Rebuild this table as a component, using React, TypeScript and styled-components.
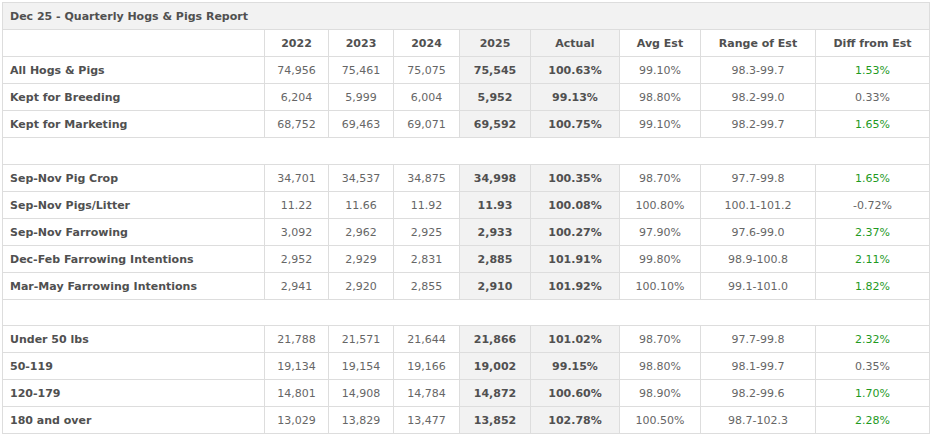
import React from 'react';
import styled, { createGlobalStyle } from 'styled-components';

const GlobalStyle = createGlobalStyle`
  body {
    margin: 0;
    background: #ffffff;
    font-family: 'DejaVu Sans', Verdana, sans-serif;
  }
`;

const Page = styled.div`
  padding: 2px 0 0 2px;
`;

const Table = styled.table`
  width: 927px;
  table-layout: fixed;
  border-collapse: collapse;
  font-size: 11px;
  color: #666666;
  border: 1px solid #dddddd;
`;

const Caption = styled.th`
  height: 26px;
  padding: 0 7px;
  text-align: left;
  font-weight: bold;
  color: #505050;
  background: #f2f2f2;
  border: 1px solid #dddddd;
`;

const Head = styled.th<{ $shade?: boolean }>`
  height: 26px;
  padding: 0 4px;
  text-align: center;
  font-weight: bold;
  color: #505050;
  background: ${({ $shade }) => ($shade ? '#f2f2f2' : '#ffffff')};
  border: 1px solid #dddddd;
`;

const Label = styled.td`
  height: 26px;
  padding: 0 7px;
  text-align: left;
  font-weight: bold;
  color: #505050;
  white-space: nowrap;
  border: 1px solid #dddddd;
`;

const Cell = styled.td<{ $shade?: boolean; $bold?: boolean; $good?: boolean }>`
  height: 26px;
  padding: 0 4px;
  text-align: center;
  font-weight: ${({ $bold }) => ($bold ? 'bold' : 'normal')};
  color: ${({ $bold, $good }) => ($good ? '#1f9a1f' : $bold ? '#505050' : '#666666')};
  background: ${({ $shade }) => ($shade ? '#f2f2f2' : '#ffffff')};
  white-space: nowrap;
  border: 1px solid #dddddd;
`;

const Spacer = styled.td<{ $h: number }>`
  height: ${({ $h }) => $h}px;
  padding: 0;
  border: 1px solid #dddddd;
`;

type Row = {
  label: string;
  years: [string, string, string, string];
  actual: string;
  avg: string;
  range: string;
  diff: string;
  good: boolean;
};

const groups: Row[][] = [
  [
    { label: 'All Hogs & Pigs', years: ['74,956', '75,461', '75,075', '75,545'], actual: '100.63%', avg: '99.10%', range: '98.3-99.7', diff: '1.53%', good: true },
    { label: 'Kept for Breeding', years: ['6,204', '5,999', '6,004', '5,952'], actual: '99.13%', avg: '98.80%', range: '98.2-99.0', diff: '0.33%', good: false },
    { label: 'Kept for Marketing', years: ['68,752', '69,463', '69,071', '69,592'], actual: '100.75%', avg: '99.10%', range: '98.2-99.7', diff: '1.65%', good: true },
  ],
  [
    { label: 'Sep-Nov Pig Crop', years: ['34,701', '34,537', '34,875', '34,998'], actual: '100.35%', avg: '98.70%', range: '97.7-99.8', diff: '1.65%', good: true },
    { label: 'Sep-Nov Pigs/Litter', years: ['11.22', '11.66', '11.92', '11.93'], actual: '100.08%', avg: '100.80%', range: '100.1-101.2', diff: '-0.72%', good: false },
    { label: 'Sep-Nov Farrowing', years: ['3,092', '2,962', '2,925', '2,933'], actual: '100.27%', avg: '97.90%', range: '97.6-99.0', diff: '2.37%', good: true },
    { label: 'Dec-Feb Farrowing Intentions', years: ['2,952', '2,929', '2,831', '2,885'], actual: '101.91%', avg: '99.80%', range: '98.9-100.8', diff: '2.11%', good: true },
    { label: 'Mar-May Farrowing Intentions', years: ['2,941', '2,920', '2,855', '2,910'], actual: '101.92%', avg: '100.10%', range: '99.1-101.0', diff: '1.82%', good: true },
  ],
  [
    { label: 'Under 50 lbs', years: ['21,788', '21,571', '21,644', '21,866'], actual: '101.02%', avg: '98.70%', range: '97.7-99.8', diff: '2.32%', good: true },
    { label: '50-119', years: ['19,134', '19,154', '19,166', '19,002'], actual: '99.15%', avg: '98.80%', range: '98.1-99.7', diff: '0.35%', good: false },
    { label: '120-179', years: ['14,801', '14,908', '14,784', '14,872'], actual: '100.60%', avg: '98.90%', range: '98.2-99.6', diff: '1.70%', good: true },
    { label: '180 and over', years: ['13,029', '13,829', '13,477', '13,852'], actual: '102.78%', avg: '100.50%', range: '98.7-102.3', diff: '2.28%', good: true },
  ],
];

const widths = [262, 64, 65, 66, 71, 89, 81, 115, 114];
const spacerHeights = [26, 25];

const App: React.FC = () => {
  return (
    <Page>
      <GlobalStyle />
      <Table>
        <colgroup>
          {widths.map((w, i) => (
            <col key={i} style={{ width: w }} />
          ))}
        </colgroup>
        <thead>
          <tr>
            <Caption colSpan={9}>Dec 25 - Quarterly Hogs &amp; Pigs Report</Caption>
          </tr>
          <tr>
            <Head />
            <Head>2022</Head>
            <Head>2023</Head>
            <Head>2024</Head>
            <Head $shade>2025</Head>
            <Head $shade>Actual</Head>
            <Head>Avg Est</Head>
            <Head>Range of Est</Head>
            <Head>Diff from Est</Head>
          </tr>
        </thead>
        <tbody>
          {groups.map((group, gi) => (
            <React.Fragment key={gi}>
              {gi > 0 && (
                <tr>
                  <Spacer colSpan={9} $h={spacerHeights[gi - 1]} />
                </tr>
              )}
              {group.map((row) => (
                <tr key={row.label}>
                  <Label>{row.label}</Label>
                  <Cell>{row.years[0]}</Cell>
                  <Cell>{row.years[1]}</Cell>
                  <Cell>{row.years[2]}</Cell>
                  <Cell $shade $bold>{row.years[3]}</Cell>
                  <Cell $shade $bold>{row.actual}</Cell>
                  <Cell>{row.avg}</Cell>
                  <Cell>{row.range}</Cell>
                  <Cell $good={row.good}>{row.diff}</Cell>
                </tr>
              ))}
            </React.Fragment>
          ))}
        </tbody>
      </Table>
    </Page>
  );
};

export default App;
